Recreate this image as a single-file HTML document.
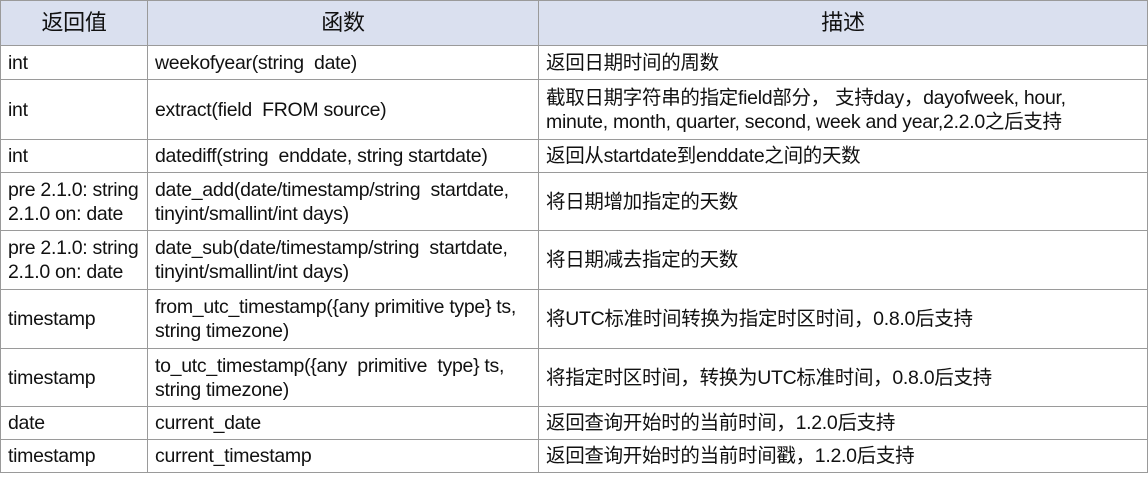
<!DOCTYPE html>
<html><head><meta charset="utf-8"><style>
body{margin:0;width:1148px;height:482px;background:#fff;overflow:hidden;font-family:"Liberation Sans","Noto Sans CJK SC",sans-serif;font-size:19.5px;color:#111;}
table{position:absolute;left:0;top:0;border-collapse:collapse;table-layout:fixed;width:1147px;}
td,th{border:1px solid #9a9a9a;padding:0 0 0 7px;line-height:24px;vertical-align:middle;white-space:nowrap;overflow:hidden;letter-spacing:-0.3px;}
th{background:#dae0ef;font-weight:normal;font-size:22px;text-align:center;padding:0;}
</style></head><body>
<table>
<colgroup><col style="width:147px"><col style="width:391px"><col style="width:609px"></colgroup>
<tr style="height:45px"><th>返回值</th><th>函数</th><th>描述</th></tr>
<tr style="height:34px"><td>int</td><td>weekofyear(string&nbsp; date)</td><td>返回日期时间的周数</td></tr>
<tr style="height:60px"><td>int</td><td>extract(field&nbsp; FROM source)</td><td>截取日期字符串的指定field部分， 支持day，dayofweek, hour,<br>minute, month, quarter, second, week and year,2.2.0之后支持</td></tr>
<tr style="height:33px"><td>int</td><td>datediff(string&nbsp; enddate, string startdate)</td><td>返回从startdate到enddate之间的天数</td></tr>
<tr style="height:58px"><td>pre 2.1.0: string<br>2.1.0 on: date</td><td>date_add(date/timestamp/string&nbsp; startdate,<br>tinyint/smallint/int days)</td><td>将日期增加指定的天数</td></tr>
<tr style="height:59px"><td>pre 2.1.0: string<br>2.1.0 on: date</td><td>date_sub(date/timestamp/string&nbsp; startdate,<br>tinyint/smallint/int days)</td><td>将日期减去指定的天数</td></tr>
<tr style="height:59px"><td>timestamp</td><td>from_utc_timestamp({any primitive type} ts,<br>string timezone)</td><td>将UTC标准时间转换为指定时区时间，0.8.0后支持</td></tr>
<tr style="height:58px"><td>timestamp</td><td>to_utc_timestamp({any&nbsp; primitive&nbsp; type} ts,<br>string timezone)</td><td>将指定时区时间，转换为UTC标准时间，0.8.0后支持</td></tr>
<tr style="height:33px"><td>date</td><td>current_date</td><td>返回查询开始时的当前时间，1.2.0后支持</td></tr>
<tr style="height:33px"><td>timestamp</td><td>current_timestamp</td><td>返回查询开始时的当前时间戳，1.2.0后支持</td></tr>
</table>
</body></html>
